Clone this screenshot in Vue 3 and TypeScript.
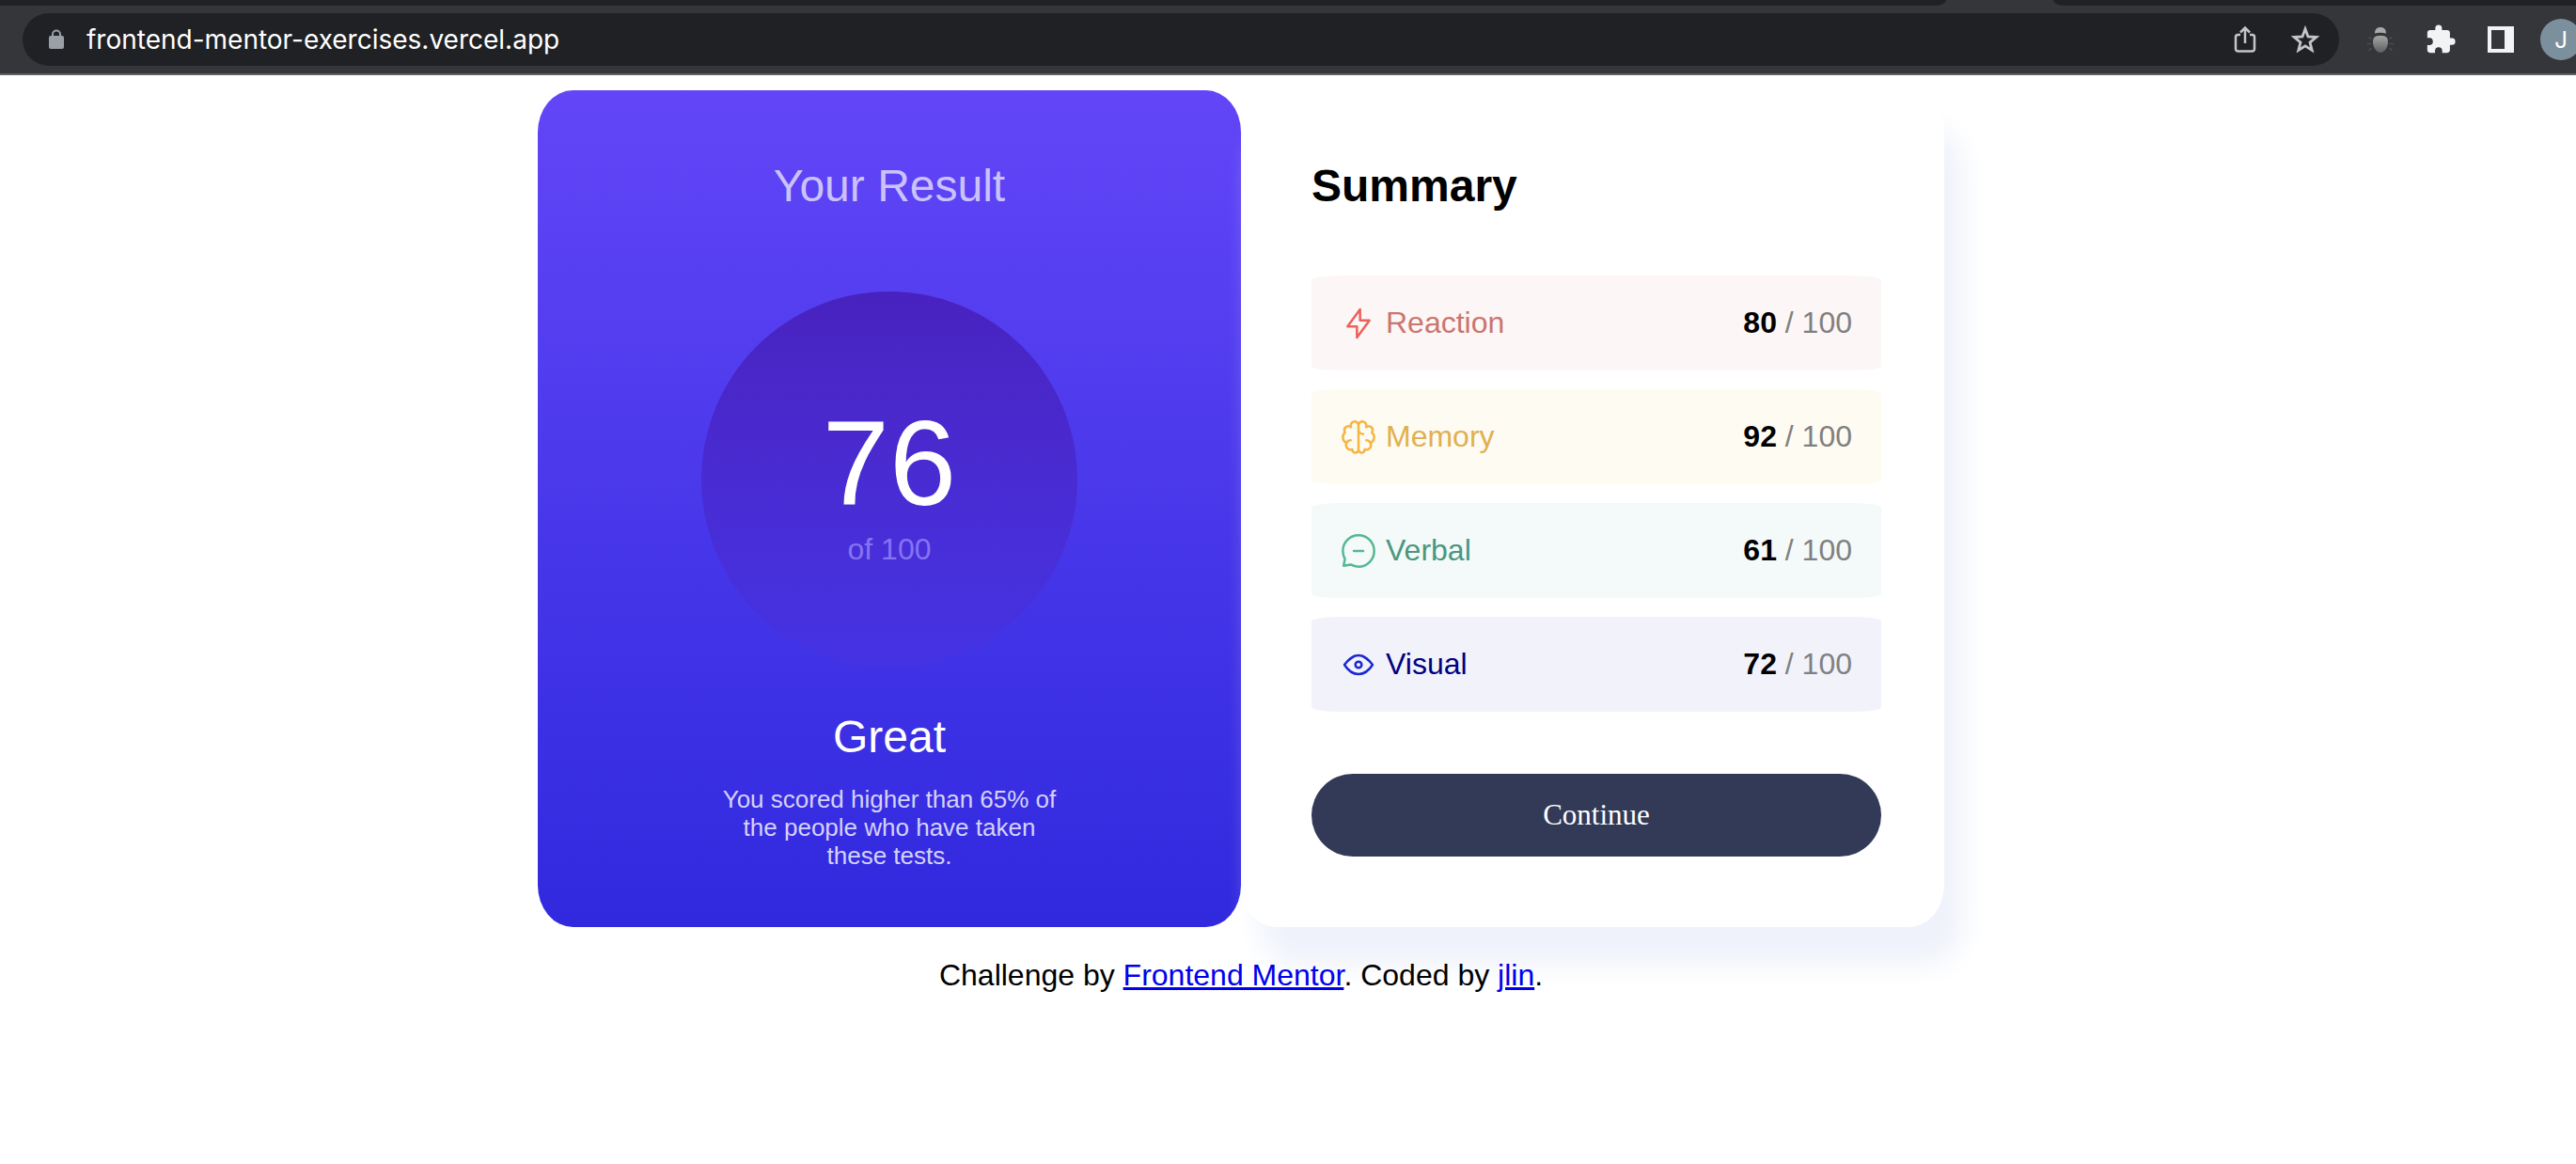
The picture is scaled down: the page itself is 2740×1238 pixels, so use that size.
<script setup lang="ts">
import { ref } from 'vue'

interface Category {
  name: string
  score: number
  tone: string
  paths: string[]
}

const url = ref('frontend-mentor-exercises.vercel.app')

const categories: Category[] = [
  {
    name: 'Reaction',
    score: 80,
    tone: 'reaction',
    paths: ['M10.833 8.333V2.5l-6.666 9.167h5V17.5l6.666-9.167h-5Z'],
  },
  {
    name: 'Memory',
    score: 92,
    tone: 'memory',
    paths: [
      'M5.833 11.667a2.5 2.5 0 1 0 .834 4.858',
      'M3.553 13.004a3.333 3.333 0 0 1-.728-5.53m.025-.067a2.083 2.083 0 0 1 2.983-2.824m.199.054A2.083 2.083 0 1 1 10 3.75v12.917a1.667 1.667 0 0 1-3.333 0M10 5.833a2.5 2.5 0 0 0 2.5 2.5m1.667 3.334a2.5 2.5 0 1 1-.834 4.858',
      'M16.447 13.004a3.334 3.334 0 0 0 .728-5.53m-.025-.067a2.083 2.083 0 0 0-2.983-2.824M10 3.75a2.085 2.085 0 0 1 2.538-2.033 2.084 2.084 0 0 1 1.43 2.92m-.635 12.03a1.667 1.667 0 0 1-3.333 0',
    ],
  },
  {
    name: 'Verbal',
    score: 61,
    tone: 'verbal',
    paths: [
      'M7.5 10h5M10 18.333A8.333 8.333 0 1 0 1.667 10c0 1.518.406 2.942 1.115 4.167l-.699 3.75 3.75-.699A8.295 8.295 0 0 0 10 18.333Z',
    ],
  },
  {
    name: 'Visual',
    score: 72,
    tone: 'visual',
    paths: [
      'M10 11.667a1.667 1.667 0 1 0 0-3.334 1.667 1.667 0 0 0 0 3.334Z',
      'M17.5 10c-1.574 2.492-4.402 5-7.5 5s-5.926-2.508-7.5-5C4.416 7.632 6.66 5 10 5s5.584 2.632 7.5 5Z',
    ],
  },
]
</script>

<template>
  <div class="browser">
    <header class="chrome">
      <div class="tab-strip">
        <span class="tab-rest tab-rest-left"></span>
        <span class="tab-rest tab-rest-right"></span>
      </div>
      <div class="toolbar">
        <div class="omnibox">
          <svg class="lock" viewBox="0 0 16 22" aria-hidden="true">
            <path d="M4 9V5.5a4 4 0 0 1 8 0V9" fill="none" stroke="#9aa0a6" stroke-width="2" />
            <rect x="0" y="7" width="16" height="14" rx="2" fill="#9aa0a6" />
          </svg>
          <input v-model="url" class="url" type="text" aria-label="Address" />
          <button class="tool" type="button" aria-label="Share">
            <svg width="24" height="32" viewBox="0 0 24 32" fill="none" stroke="#c4c5c6" stroke-width="2.5">
              <path d="M7 11H4.5A2.5 2.5 0 0 0 2 13.500V26a2.5 2.5 0 0 0 2.5 2.5h15A2.5 2.5 0 0 0 22 26V13.500a2.5 2.5 0 0 0-2.500-2.500H17M12 20V4M7 8.500l5-5 5 5" />
            </svg>
          </button>
          <button class="tool" type="button" aria-label="Bookmark this page">
            <svg width="32" height="32" viewBox="0 0 32 32" fill="none" stroke="#c4c5c6" stroke-width="2.8">
              <path d="M16 4.700l3 8.200 8.800.6-6.800 5.600 2.200 8.400L16 22.900l-7.200 4.600L11 19.100l-6.800-5.600 8.800-.6z" />
            </svg>
          </button>
        </div>
        <div class="extensions">
          <button class="tool" type="button" aria-label="Extension">
            <svg width="32" height="32" viewBox="0 0 32 32">
              <defs>
                <linearGradient id="bug-body" x1="0" y1="0" x2="0" y2="1">
                  <stop offset="0" stop-color="#a6a6a6" />
                  <stop offset="1" stop-color="#5e5e5e" />
                </linearGradient>
              </defs>
              <path d="M10 9.500C10 5 12.500 3 16 3s6 2 6 6.500c-4-1-8-1-12 0z" fill="#a9a9a9" />
              <path d="M16 12c5 0 8 1 8 6.500S20.500 30 16 30s-8-6-8-11.500S11 12 16 12z" fill="url(#bug-body)" />
              <path d="M6.500 15.500l-2-1.500-1 .5M6.500 20.500H3l-1 1M7 25.500l-2.500 1-.5 1.500M25.500 15.500l2-1.500 1 .5M25.500 20.500H29l1 1M25 25.500l2.500 1 .5 1.500" fill="none" stroke="#505155" stroke-width="1.200" />
            </svg>
          </button>
          <button class="tool" type="button" aria-label="Extensions">
            <svg width="34" height="34" viewBox="0 0 24 24" fill="#f1f3f4">
              <path d="M20.500 11H19V7c0-1.100-.9-2-2-2h-4V3.500a2.500 2.500 0 0 0-5 0V5H4c-1.100 0-2 .9-2 2v3.800h1.500a2.700 2.700 0 0 1 0 5.400H2V20c0 1.100.9 2 2 2h3.800v-1.500a2.700 2.700 0 0 1 5.400 0V22H17c1.100 0 2-.9 2-2v-4h1.500a2.500 2.500 0 0 0 0-5z" />
            </svg>
          </button>
          <button class="tool" type="button" aria-label="Side panel">
            <svg width="28" height="28" viewBox="0 0 28 28">
              <path d="M0 0h28v28H0zM4 4v20h14V4z" fill="#f1f3f4" fill-rule="evenodd" />
            </svg>
          </button>
          <button class="tool avatar" type="button" aria-label="Profile">J</button>
        </div>
      </div>
    </header>

    <main class="page">
      <div class="card">
        <section class="result">
          <h1 class="result-title">Your Result</h1>
          <div class="dial">
            <span class="dial-score">76</span>
            <span class="dial-total">of 100</span>
          </div>
          <h2 class="verdict">Great</h2>
          <p class="verdict-text">You scored higher than 65% of the people who have taken these tests.</p>
        </section>

        <section class="summary">
          <h2 class="summary-title">Summary</h2>
          <ul class="categories">
            <li v-for="item in categories" :key="item.name" class="category" :class="item.tone">
              <svg class="category-icon" viewBox="0 0 20 20" aria-hidden="true">
                <path v-for="d in item.paths" :key="d" :d="d" />
              </svg>
              <span class="category-name">{{ item.name }}</span>
              <span class="category-score"><b>{{ item.score }}</b> / 100</span>
            </li>
          </ul>
          <button class="continue" type="button">Continue</button>
        </section>
      </div>

      <footer class="attribution">
        Challenge by <a href="#frontend-mentor">Frontend Mentor</a>. Coded by <a href="#jlin">jlin</a>.
      </footer>
    </main>
  </div>
</template>

<style>
body {
  margin: 0;
  background: #fff;
}
</style>

<style scoped>
.browser {
  overflow: hidden;
  font-family: "Liberation Sans", Arial, sans-serif;
  font-size: 32px;
  color: #000;
}

.chrome {
  background: #35363a;
  border-bottom: 2px solid #5f6064;
}

.tab-strip {
  display: flex;
  gap: 114px;
  height: 6px;
}

.tab-rest {
  background: #202124;
}

.tab-rest-left {
  flex: 1;
  border-bottom-right-radius: 12px 6px;
}

.tab-rest-right {
  width: 556px;
  border-bottom-left-radius: 12px 6px;
}

.toolbar {
  display: flex;
  align-items: center;
  gap: 22px;
  margin-right: -6px;
  padding: 8px 0 8px 24px;
}

.omnibox {
  display: flex;
  flex: 1;
  align-items: center;
  gap: 20px;
  height: 56px;
  box-sizing: border-box;
  padding: 0 14px 0 28px;
  border-radius: 28px;
  background: #202124;
}

.lock {
  width: 16px;
  height: 22px;
}

.url {
  flex: 1;
  min-width: 0;
  padding: 0 4px;
  border: 0;
  outline: 0;
  background: none;
  color: #fff;
  font-family: Inter, Roboto, sans-serif;
  font-size: 28px;
  line-height: 36px;
}

.tool {
  display: flex;
  align-items: center;
  justify-content: center;
  width: 44px;
  height: 44px;
  padding: 0;
  border: 0;
  border-radius: 50%;
  background: none;
}

.extensions {
  display: flex;
  gap: 20px;
}

.avatar {
  background: #7b909c;
  color: #fff;
  font-family: Inter, Roboto, sans-serif;
  font-size: 24px;
}

.page {
  display: flex;
  flex-direction: column;
  align-items: center;
  padding: 16px 100px 32px 0;
}

.card {
  display: grid;
  grid-template-columns: 1fr 1fr;
  width: 100%;
  max-width: 1496px;
}

h1,
h2,
p,
ul {
  margin: 0;
  padding: 0;
}

.result {
  display: flex;
  flex-direction: column;
  align-items: center;
  padding: 74px 40px 60px;
  border-radius: 5%;
  background: linear-gradient(#6246f7, #3029de);
  color: #fff;
  text-align: center;
}

.result-title,
.verdict,
.summary-title {
  font-size: 48px;
  line-height: 56px;
}

.result-title {
  color: #cbc2fc;
  font-weight: 400;
}

.dial {
  display: flex;
  flex-direction: column;
  align-items: center;
  justify-content: center;
  gap: 9px;
  width: 400px;
  height: 400px;
  box-sizing: border-box;
  margin: 84px 0 46px;
  padding-top: 10px;
  border-radius: 50%;
  background: linear-gradient(#4822bf, rgba(72, 50, 224, 0.5));
}

.dial-score {
  font-size: 128px;
  line-height: 128px;
}

.dial-total {
  color: #8474f4;
  line-height: 36px;
}

.verdict {
  font-weight: 400;
}

.verdict-text {
  max-width: 374px;
  margin-top: 23px;
  color: #d5d2fa;
  font-size: 26px;
  line-height: 30px;
}

.summary {
  display: flex;
  flex-direction: column;
  padding: 74px 67px 75px 75px;
  border-radius: 5%;
  background: #fff;
  box-shadow: 20px 40px 30px #eff2fb;
}

.categories {
  display: flex;
  flex-direction: column;
  gap: 20px;
  margin: 67px 0 66px;
  list-style: none;
}

.category {
  display: flex;
  align-items: center;
  padding: 30px 31px 30px 30px;
  border-radius: 5%;
  line-height: 41px;
}

.category-icon {
  width: 40px;
  height: 40px;
  margin-right: 9px;
  fill: none;
  stroke-width: 1.25;
  stroke-linecap: round;
  stroke-linejoin: round;
}

.category-name {
  flex: 1;
}

.category-score {
  color: #808080;
}

.category-score b {
  color: #000;
}

.reaction {
  background: #fcf6f6;
  color: #ca756f;
}

.reaction .category-icon {
  stroke: #ec625b;
}

.memory {
  background: #fefbf2;
  color: #e0b050;
}

.memory .category-icon {
  stroke: #f5b642;
}

.verbal {
  background: #f4faf9;
  color: #4b967e;
}

.verbal .category-icon {
  stroke: #53b992;
}

.visual {
  background: #f2f2fb;
  color: #000080;
}

.visual .category-icon {
  stroke: #1b28d2;
}

.continue {
  height: 88px;
  border: 0;
  border-radius: 44px;
  background: #323a57;
  color: #fff;
  font-family: "Liberation Serif", Georgia, serif;
  font-size: 31px;
}

.attribution {
  position: relative;
  margin-top: 33px;
  line-height: 36px;
}

.attribution a {
  color: #0000ee;
}
</style>
